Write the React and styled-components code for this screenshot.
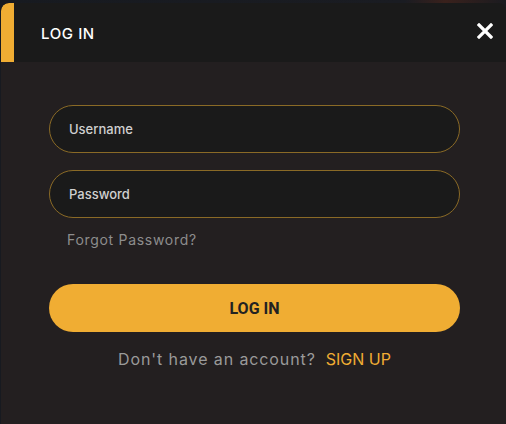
import React from 'react';
import styled, { createGlobalStyle } from 'styled-components';

const Global = createGlobalStyle`
  html, body {
    margin: 0;
    padding: 0;
    background: #15171c;
    height: 100%;
    overflow: hidden;
  }
  #root {
    height: 100%;
  }
`;

const Backdrop = styled.div`
  height: 100%;
  padding: 3px 0 0 1px;
  box-sizing: border-box;
  background: linear-gradient(90deg, #171a20 0%, #1a1c22 80%, #3a211c 88%, #1a1b20 100%);
`;

const Modal = styled.div`
  width: 505px;
  height: 430px;
  background: #231f20;
  border-radius: 8px 8px 0 0;
  overflow: hidden;
  font-family: Inter, "Noto Sans", sans-serif;
`;

const Header = styled.div`
  height: 59px;
  background: #1a1a1a;
  display: flex;
  align-items: center;
  border-left: 13px solid #f0ad33;
  border-top-left-radius: 8px;
  padding: 0 12px 0 27px;
`;

const Title = styled.h2`
  flex: 1;
  margin: 0;
  color: #fff;
  font-size: 15px;
  font-weight: 500;
  letter-spacing: 0.6px;
  padding-top: 2px;
`;

const Close = styled.button`
  border: 0;
  background: none;
  padding: 0;
  width: 18px;
  height: 18px;
  display: flex;
  align-items: center;
  justify-content: center;
  margin-top: -4px;
  cursor: pointer;
`;

const Body = styled.form`
  padding: 43px 46px 0 48px;
  display: flex;
  flex-direction: column;
`;

const Field = styled.input`
  box-sizing: border-box;
  height: 48px;
  width: 100%;
  border: 1px solid #8a6a26;
  border-radius: 24px;
  background: #1a1a1a;
  padding: 0 19px;
  font-family: Inter, "Noto Sans", sans-serif;
  font-size: 13px;
  font-weight: 500;
  color: #ddd;
  outline: none;
  margin-bottom: ${p => p.$gap}px;
  &::placeholder {
    color: #d0d0d0;
  }
`;

const Forgot = styled.a`
  color: #8d8d8d;
  font-size: 14px;
  letter-spacing: 0.7px;
  margin: 13px 0 0 18px;
  text-decoration: none;
`;

const Submit = styled.button`
  margin-top: 36px;
  height: 48px;
  border: 0;
  border-radius: 24px;
  background: #f0ad33;
  color: #222;
  font-family: Roboto, "Liberation Sans", sans-serif;
  font-weight: 700;
  font-size: 16px;
  cursor: pointer;
`;

const Footer = styled.p`
  margin: 17px 0 0;
  text-align: center;
  color: #9a9a9a;
  font-size: 16px;
  letter-spacing: 0.9px;
`;

const SignUp = styled.a`
  color: #f0ad33;
  margin-left: 10px;
  letter-spacing: 0;
  text-decoration: none;
`;

export default function App() {
  return (
    <>
      <Global />
      <Backdrop>
        <Modal>
          <Header>
            <Title>LOG IN</Title>
            <Close aria-label="close">
              <svg width="16" height="16" viewBox="0 0 16 16">
                <path d="M2 2L14 14M14 2L2 14" stroke="#fff" strokeWidth="3.2" strokeLinecap="square" />
              </svg>
            </Close>
          </Header>
          <Body onSubmit={e => e.preventDefault()}>
            <Field placeholder="Username" $gap={17} />
            <Field type="password" placeholder="Password" $gap={0} />
            <Forgot href="#">Forgot Password?</Forgot>
            <Submit type="submit">LOG IN</Submit>
            <Footer>
              Don't have an account?<SignUp href="#">SIGN UP</SignUp>
            </Footer>
          </Body>
        </Modal>
      </Backdrop>
    </>
  );
}
